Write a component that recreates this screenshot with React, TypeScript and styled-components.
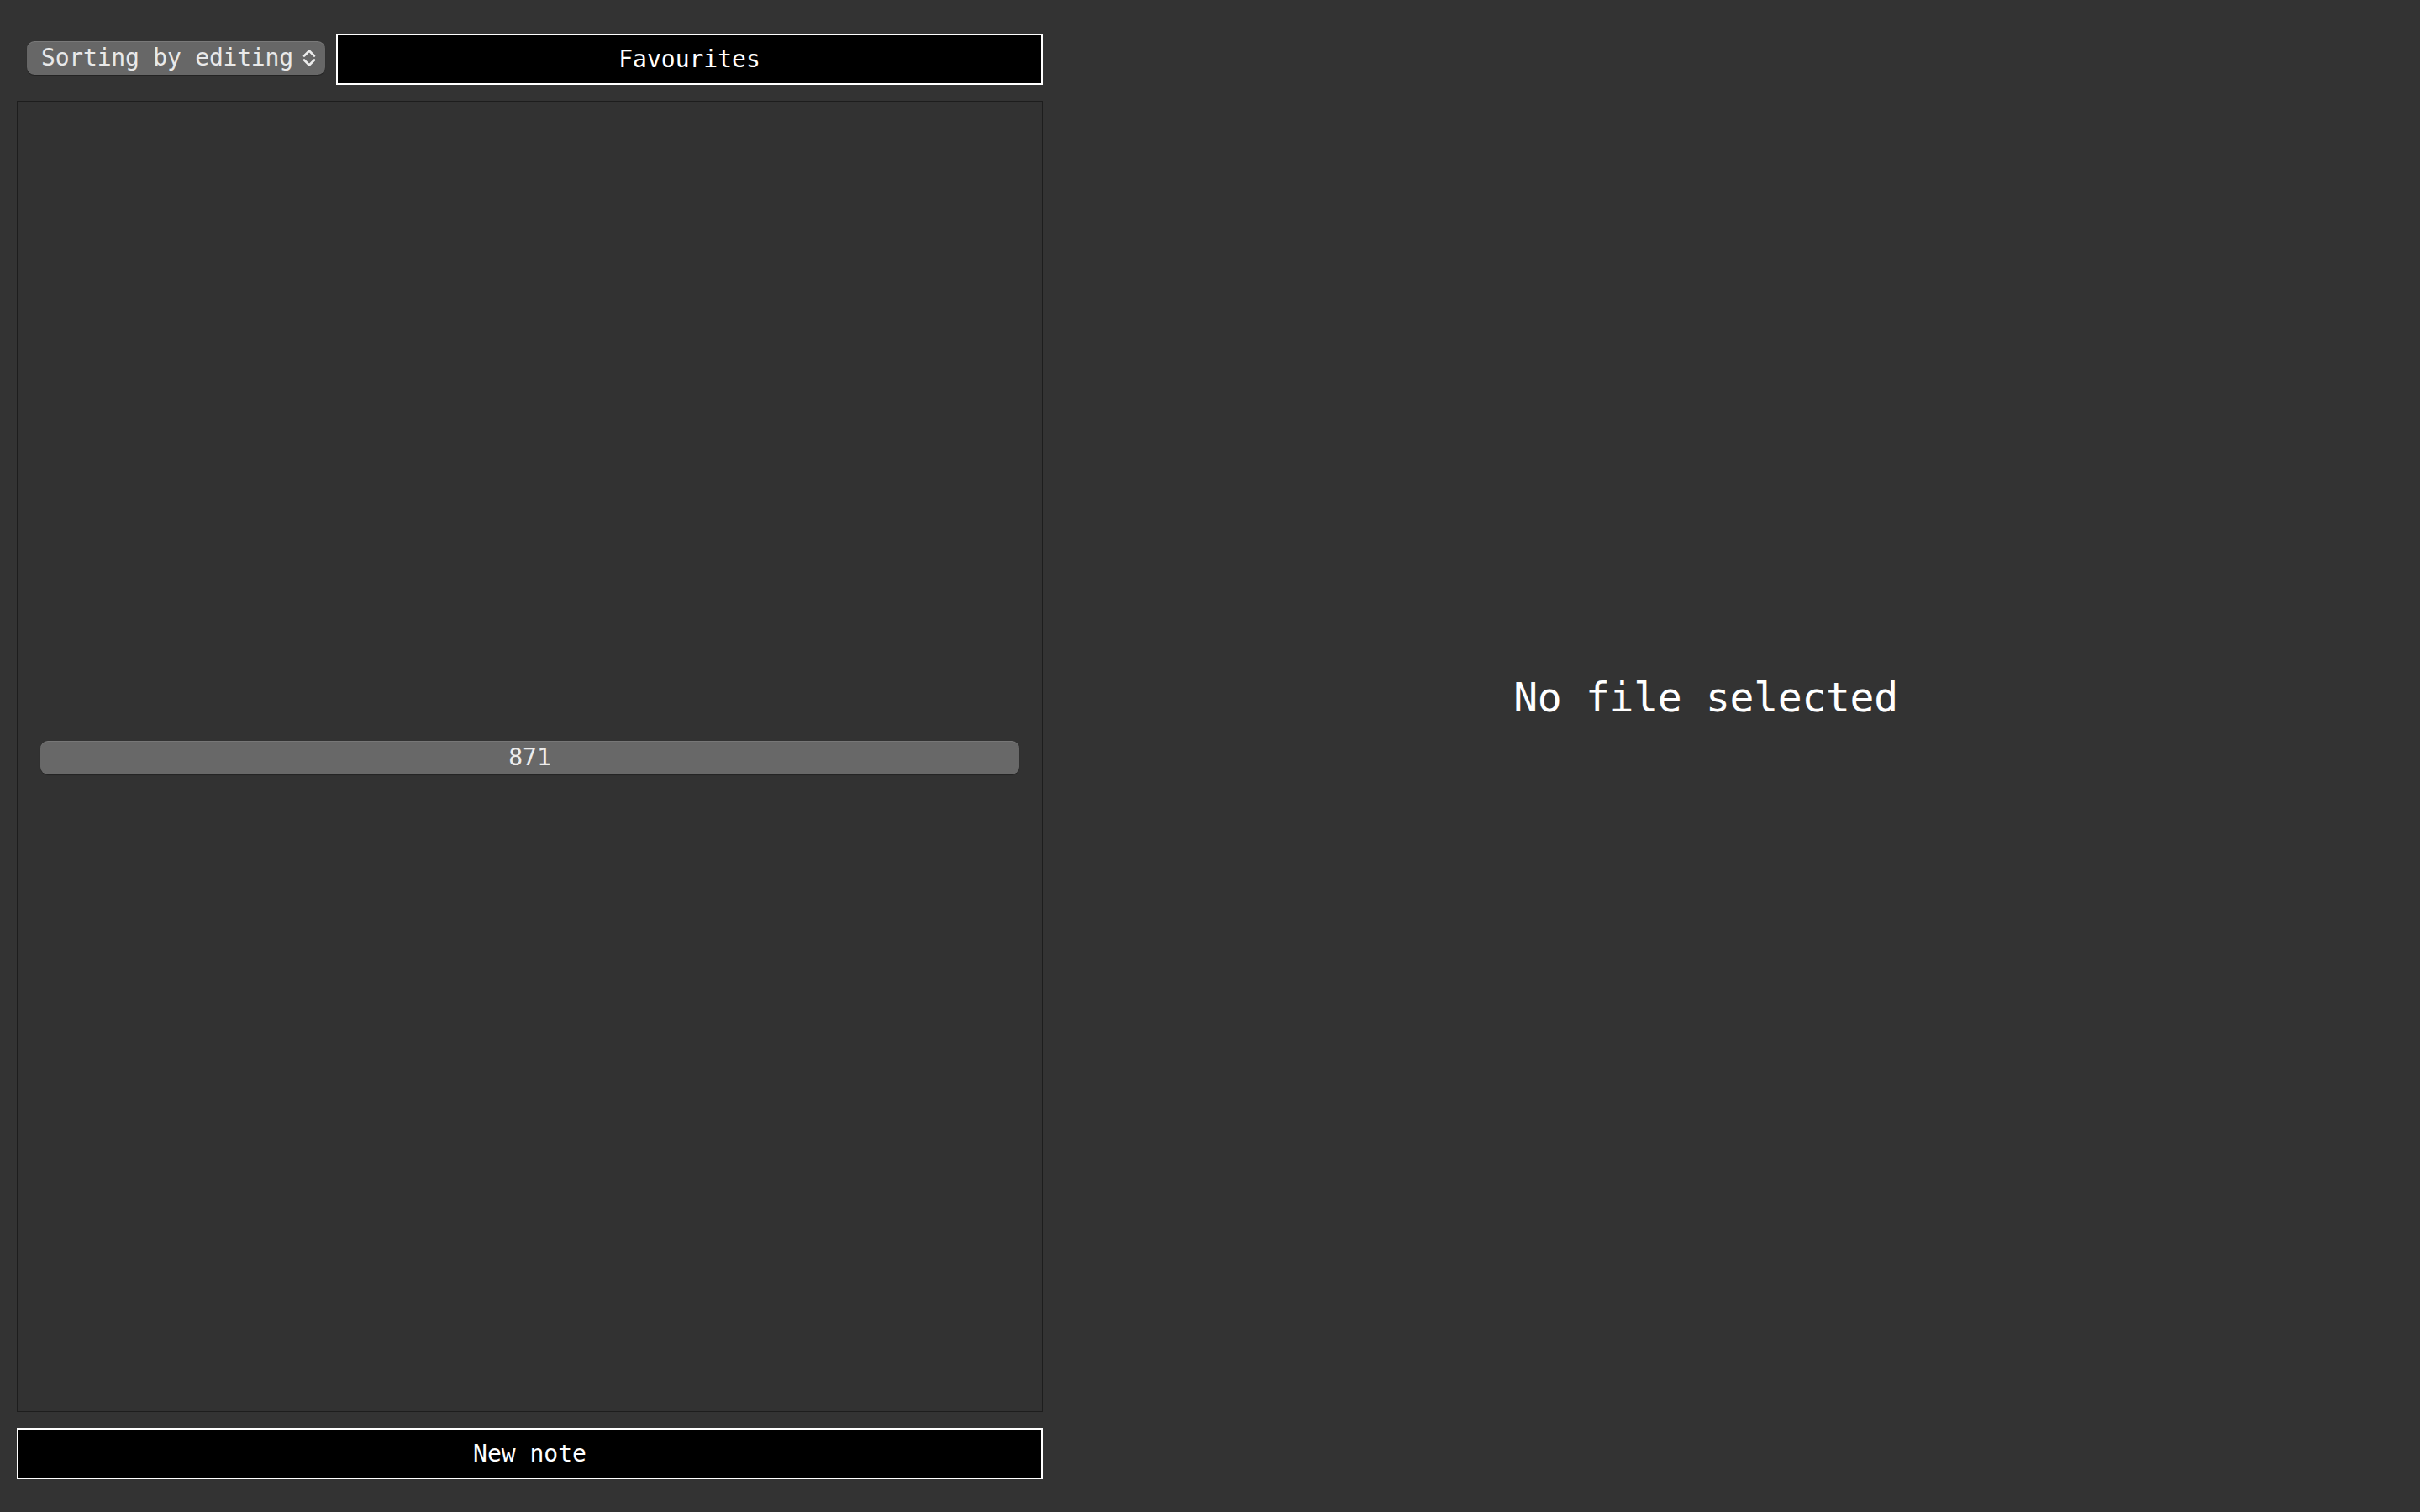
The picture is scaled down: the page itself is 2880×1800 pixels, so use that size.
import React from "react";
import styled, { createGlobalStyle } from "styled-components";

const Global = createGlobalStyle`
  html, body {
    margin: 0;
    padding: 0;
    background: #333333;
    height: 100%;
  }
  #root {
    height: 100%;
  }
`;

const mono = `"DejaVu Sans Mono", "Liberation Mono", monospace`;

const Page = styled.div`
  display: grid;
  grid-template-columns: 1221px 1fr;
  height: 1800px;
  padding-left: 20px;
  box-sizing: border-box;
  background: #333333;
  font-family: ${mono};
`;

const Sidebar = styled.div`
  display: flex;
  flex-direction: column;
  gap: 19px;
  padding: 40px 0 39px 0;
  box-sizing: border-box;
  min-height: 0;
`;

const TopBar = styled.div`
  display: flex;
  align-items: center;
  gap: 13px;
  padding-left: 12px;
  height: 61px;
`;

const SortSelect = styled.div`
  display: flex;
  align-items: center;
  justify-content: space-between;
  width: 355px;
  height: 40px;
  box-sizing: border-box;
  padding: 0 10px 0 17px;
  margin-top: -4px;
  background: #676767;
  border-radius: 9px;
  box-shadow: inset 0 1px 0 rgba(255, 255, 255, 0.12), 0 1px 1px rgba(0, 0, 0, 0.35);
  color: #e9e9e9;
  font-family: ${mono};
  font-size: 28px;
  letter-spacing: -0.2px;
  cursor: default;
`;

const OutlineButton = styled.button<{ $grow?: boolean }>`
  flex: ${(p) => (p.$grow ? "1" : "none")};
  height: 61px;
  box-sizing: border-box;
  background: #000000;
  border: 2px solid #ffffff;
  color: #ffffff;
  font-family: ${mono};
  font-size: 28px;
  padding: 0;
  margin: 0;
  cursor: pointer;
`;

const NotesPanel = styled.div`
  flex: 1;
  min-height: 0;
  box-sizing: border-box;
  border: 1px solid #1d1d1d;
  background: #323232;
  display: flex;
  flex-direction: column;
  justify-content: center;
  padding: 0 27px;
`;

const CountBar = styled.div`
  height: 40px;
  border-radius: 9px;
  background: #686868;
  box-shadow: inset 0 1px 0 rgba(255, 255, 255, 0.1), 0 1px 1px rgba(0, 0, 0, 0.3);
  color: #ececec;
  font-family: ${mono};
  font-size: 28px;
  display: flex;
  align-items: center;
  justify-content: center;
  margin-top: 2px;
`;

const Viewer = styled.div`
  display: flex;
  align-items: center;
  justify-content: center;
  padding: 0 61px 140px 0;
`;

const EmptyText = styled.div`
  color: #ffffff;
  font-family: ${mono};
  font-size: 48px;
  letter-spacing: -0.3px;
`;

const Chevrons = () => (
  <svg width="18" height="24" viewBox="0 0 18 24" fill="none">
    <path d="M3 9.5 L9 3.5 L15 9.5" stroke="#ececec" strokeWidth="2.6" strokeLinecap="round" strokeLinejoin="round" />
    <path d="M3 14.5 L9 20.5 L15 14.5" stroke="#ececec" strokeWidth="2.6" strokeLinecap="round" strokeLinejoin="round" />
  </svg>
);

export default function App() {
  return (
    <>
      <Global />
      <Page>
        <Sidebar>
          <TopBar>
            <SortSelect>
              <span>Sorting by editing</span>
              <Chevrons />
            </SortSelect>
            <OutlineButton $grow>Favourites</OutlineButton>
          </TopBar>
          <NotesPanel>
            <CountBar>871</CountBar>
          </NotesPanel>
          <OutlineButton>New note</OutlineButton>
        </Sidebar>
        <Viewer>
          <EmptyText>No file selected</EmptyText>
        </Viewer>
      </Page>
    </>
  );
}
